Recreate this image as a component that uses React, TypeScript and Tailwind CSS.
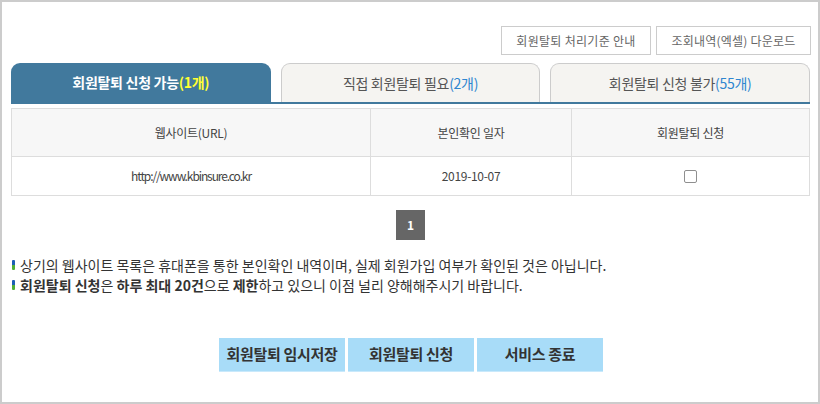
import React from 'react';

const FONT = { fontFamily: '"Noto Sans CJK KR", "Noto Sans", sans-serif' };

const tabs = [
    { label: '회원탈퇴 신청 가능', count: '(1개)', active: true },
    { label: '직접 회원탈퇴 필요', count: '(2개)', active: false },
    { label: '회원탈퇴 신청 불가', count: '(55개)', active: false },
];

function Bullet() {
    return (
        <span className="inline-flex flex-col w-[3px] h-[10px] rounded-[1px] overflow-hidden mr-[5px] shrink-0">
            <span className="h-1/2 bg-[#1d5fb5]" />
            <span className="h-1/2 bg-[#4fae38]" />
        </span>
    );
}

export default function App() {
    return (
        <div
            style={FONT}
            className="w-[820px] h-[404px] border-2 border-[#cccccc] bg-white pl-[9px] pr-[8px] pt-[24px] text-[#333]"
        >
            {/* top buttons */}
            <div className="flex justify-end gap-[5px] -mr-px">
                <button className="w-[150px] h-[29px] border border-[#cccccc] bg-white text-[12px] text-[#666] tracking-[0.3px]">
                    회원탈퇴 처리기준 안내
                </button>
                <button className="w-[155px] h-[29px] border border-[#cccccc] bg-white text-[12px] text-[#666] tracking-[0.2px]">
                    조회내역(엑셀) 다운로드
                </button>
            </div>

            {/* tabs */}
            <div className="mt-[8px] grid grid-cols-3 gap-[10px] border-b-2 border-[#41799d]">
                {tabs.map((t) => (
                    <div
                        key={t.label}
                        className={
                            t.active
                                ? 'h-[39px] rounded-t-[9px] bg-[#41799d] flex items-center justify-center text-[14px] font-bold text-white tracking-[-0.3px]'
                                : 'h-[39px] rounded-t-[9px] bg-[#f5f4f1] border border-b-0 border-[#cccccc] flex items-center justify-center text-[14px] text-[#555] tracking-[-0.3px]'
                        }
                    >
                        {t.label}
                        <span className={t.active ? 'text-[#ffff33]' : 'text-[#2e86d0]'}>{t.count}</span>
                    </div>
                ))}
            </div>

            {/* table */}
            <table className="mt-[4px] w-full border-collapse text-[12px] text-[#444]">
                <thead>
                    <tr className="h-[48px] bg-[#f7f7f7]">
                        <th className="w-[359px] border border-[#dddddd] font-normal tracking-[-0.3px]">웹사이트(URL)</th>
                        <th className="w-[201px] border border-[#dddddd] font-normal tracking-[-0.3px]">본인확인 일자</th>
                        <th className="border border-[#dddddd] font-normal tracking-[-0.3px]">회원탈퇴 신청</th>
                    </tr>
                </thead>
                <tbody>
                    <tr className="h-[39px]">
                        <td className="border border-[#dddddd] text-center tracking-[-1.1px]">http://www.kbinsure.co.kr</td>
                        <td className="border border-[#dddddd] text-center tracking-[-0.3px]">2019-10-07</td>
                        <td className="border border-[#dddddd]">
                            <div className="flex justify-center">
                                <span className="w-[13px] h-[13px] border border-[#8f8f8f] rounded-[2px] bg-white" />
                            </div>
                        </td>
                    </tr>
                </tbody>
            </table>

            {/* pagination */}
            <div className="mt-[14px] flex justify-center">
                <span className="w-[29px] h-[30px] bg-[#666666] text-white text-[12px] font-bold flex items-center justify-center">
                    1
                </span>
            </div>

            {/* notes */}
            <div className="mt-[15px] text-[14px] text-[#333] leading-[20px]">
                <p className="flex items-center pl-[1px]">
                    <Bullet />
                    상기의 웹사이트 목록은 휴대폰을 통한 본인확인 내역이며, 실제 회원가입 여부가 확인된 것은 아닙니다.
                </p>
                <p className="flex items-center pl-[1px]">
                    <Bullet />
                    <span>
                        <b>회원탈퇴 신청</b>은 <b>하루 최대 20건</b>으로 <b>제한</b>하고 있으니 이점 널리 양해해주시기 바랍니다.
                    </span>
                </p>
            </div>

            {/* bottom buttons */}
            <div className="mt-[43px] flex justify-center gap-[3px] pl-[1px]">
                {['회원탈퇴 임시저장', '회원탈퇴 신청', '서비스 종료'].map((b) => (
                    <button
                        key={b}
                        className="w-[126px] h-[34px] bg-[#a8dcf8] border-b border-[#c9e9fb] text-[15px] font-bold text-[#333] tracking-[-0.3px]"
                    >
                        {b}
                    </button>
                ))}
            </div>
        </div>
    );
}
